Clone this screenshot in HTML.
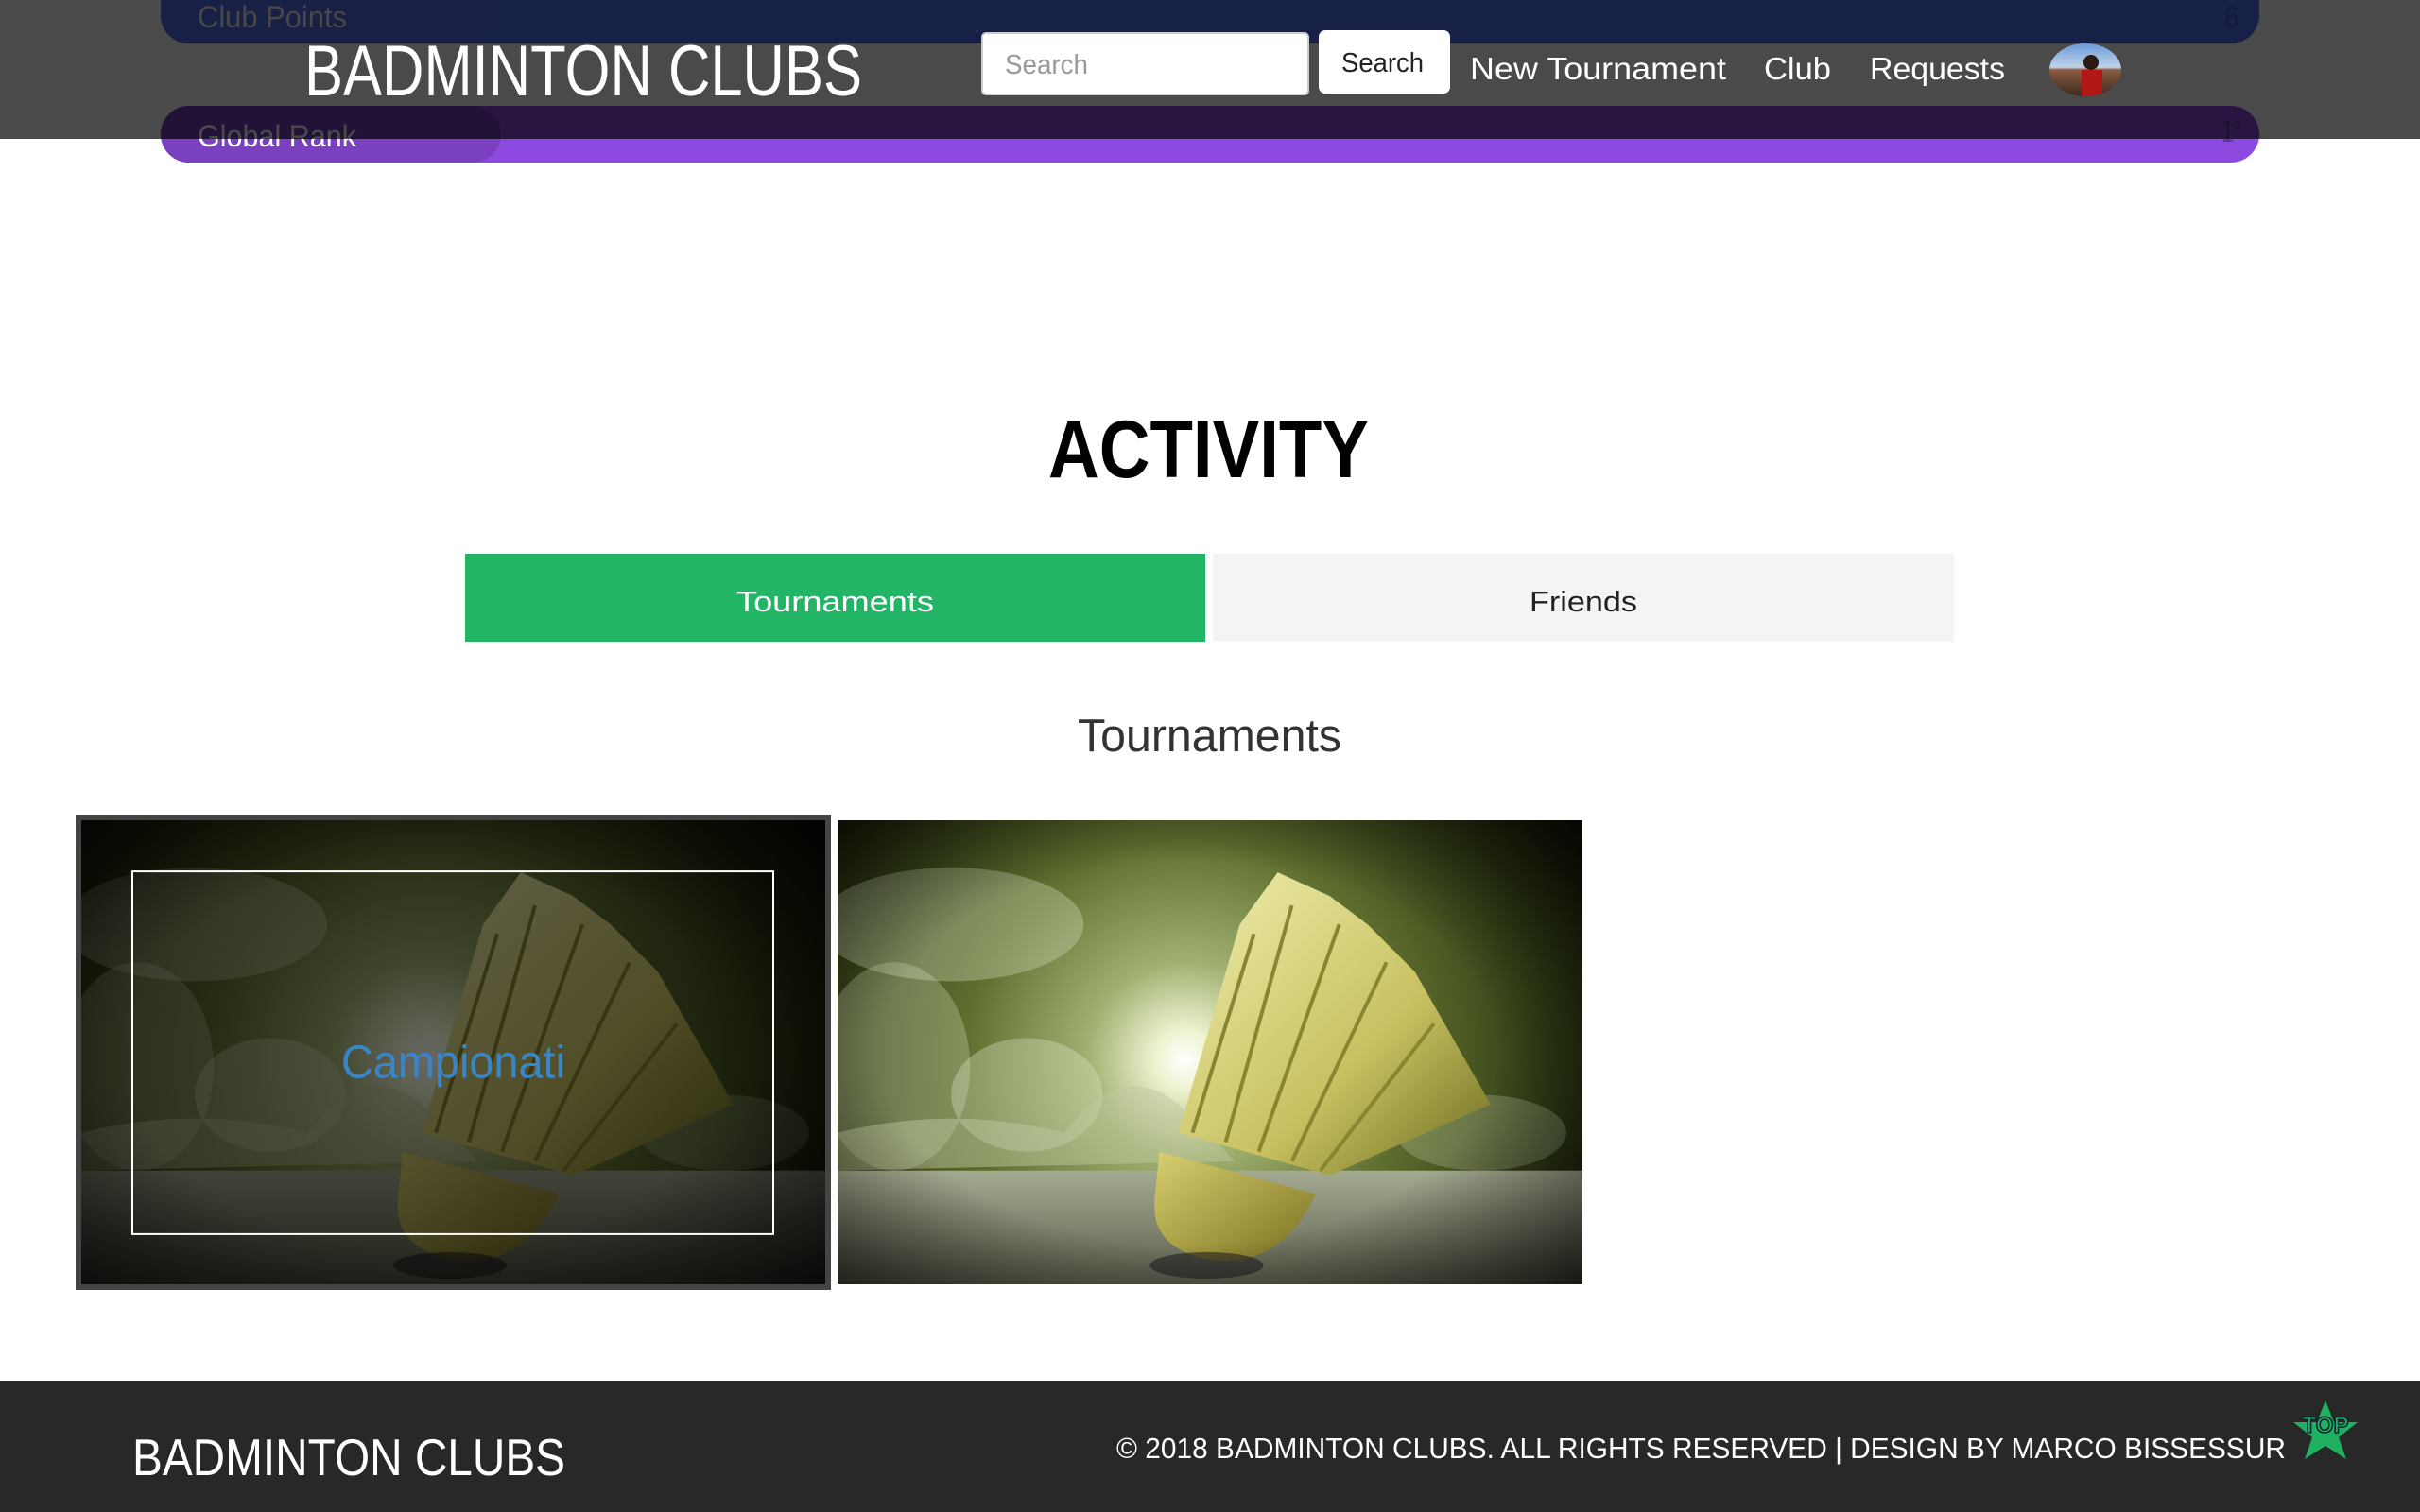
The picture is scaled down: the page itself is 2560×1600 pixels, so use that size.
<!DOCTYPE html>
<html><head><meta charset="utf-8">
<style>
*{margin:0;padding:0;box-sizing:border-box}
html,body{width:2560px;height:1600px;overflow:hidden;background:#fff;position:relative;font-family:"Liberation Sans",sans-serif}
.abs{position:absolute}
svg text{font-family:"Liberation Sans",sans-serif}
</style></head><body>

<div class="abs" style="left:170px;top:112px;width:2220px;height:60px;background:#8c4ae0;border-radius:30px;z-index:1"></div>
<div class="abs" style="left:170px;top:112px;width:360px;height:60px;background:#7a40c0;border-radius:30px;z-index:1"></div>
<div class="abs" style="left:0;top:0;width:2560px;height:147px;background:rgba(0,0,0,0.71);z-index:2"></div>
<div class="abs" style="left:170px;top:-60px;width:2220px;height:106px;background:#172047;border-radius:30px;z-index:3"></div>
<div class="abs" style="left:170px;top:-60px;width:360px;height:106px;background:#182045;border-radius:30px;z-index:3"></div>

<div class="abs" style="left:1038px;top:34px;width:347px;height:67px;background:#fff;border:2px solid #ccc;border-radius:5px;z-index:4"></div>
<div class="abs" style="left:1395px;top:32px;width:139px;height:67px;background:#fff;border-radius:7px;z-index:4"></div>
<svg class="abs" style="left:2168px;top:46px;z-index:4" width="76" height="56" viewBox="0 0 76 56">
<defs><clipPath id="av"><ellipse cx="38" cy="28" rx="38" ry="28"/></clipPath>
<linearGradient id="sky" x1="0" y1="0" x2="0" y2="1"><stop offset="0" stop-color="#6a9ad8"/><stop offset="0.45" stop-color="#c0d4e8"/><stop offset="0.5" stop-color="#8a5a40"/><stop offset="1" stop-color="#3a2a20"/></linearGradient></defs>
<g clip-path="url(#av)"><rect width="76" height="56" fill="url(#sky)"/>
<rect x="34" y="28" width="22" height="28" fill="#b01818"/><circle cx="44" cy="20" r="8" fill="#2a1a12"/></g></svg>

<svg class="abs" style="left:0;top:0;z-index:5" width="2560" height="1600">
<text x="209" y="29" font-size="32" fill="#474747" textLength="158" lengthAdjust="spacingAndGlyphs">Club Points</text>
<text x="2354" y="29" font-size="32" fill="#14193a" textLength="14" lengthAdjust="spacingAndGlyphs">6</text>
<text x="322" y="101" font-size="76" fill="#fff" textLength="590" lengthAdjust="spacingAndGlyphs">BADMINTON CLUBS</text>
<text x="1063" y="78" font-size="29" fill="#999" textLength="88" lengthAdjust="spacingAndGlyphs">Search</text>
<text x="1419" y="76" font-size="29" fill="#222" textLength="87" lengthAdjust="spacingAndGlyphs">Search</text>
<text x="1555" y="84" font-size="33" fill="#fff" textLength="271" lengthAdjust="spacingAndGlyphs">New Tournament</text>
<text x="1866" y="84" font-size="33" fill="#fff" textLength="71" lengthAdjust="spacingAndGlyphs">Club</text>
<text x="1978" y="84" font-size="33" fill="#fff" textLength="143" lengthAdjust="spacingAndGlyphs">Requests</text>
</svg>
<svg class="abs" style="left:0;top:0;z-index:1" width="2560" height="200">
<text x="209" y="155" font-size="32" fill="#fff" textLength="168" lengthAdjust="spacingAndGlyphs">Global Rank</text>
<text x="2350" y="150" font-size="32" fill="#5a3a90" textLength="22" lengthAdjust="spacingAndGlyphs">1°</text>
</svg>

<div class="abs" style="left:492px;top:586px;width:783px;height:93px;background:#23b566"></div>
<div class="abs" style="left:1283px;top:586px;width:784px;height:93px;background:#f4f4f4"></div>
<svg class="abs" style="left:0;top:400px" width="2560" height="420">
<text x="1109" y="105" font-size="86" font-weight="bold" fill="#000" textLength="339" lengthAdjust="spacingAndGlyphs">ACTIVITY</text>
<text x="779" y="247" font-size="31" fill="#fff" textLength="209" lengthAdjust="spacingAndGlyphs">Tournaments</text>
<text x="1618" y="247" font-size="31" fill="#222" textLength="114" lengthAdjust="spacingAndGlyphs">Friends</text>
<text x="1140" y="395" font-size="49" fill="#333" textLength="279" lengthAdjust="spacingAndGlyphs">Tournaments</text>
</svg>

<div class="abs" style="left:80px;top:862px;width:799px;height:503px;background:#444"></div>
<svg class="abs" style="left:86px;top:868px" width="787" height="491" viewBox="0 0 787 490" preserveAspectRatio="none">
<defs>
<radialGradient id="bg1" cx="367" cy="253" r="520" gradientUnits="userSpaceOnUse"><stop offset="0" stop-color="#fff"/><stop offset="0.06" stop-color="#eef3d0"/><stop offset="0.2" stop-color="#a0b070"/><stop offset="0.45" stop-color="#5e6e2e"/><stop offset="0.75" stop-color="#2e3913"/><stop offset="1" stop-color="#0a0f03"/></radialGradient>
<linearGradient id="gr1" x1="0" y1="0" x2="0" y2="1"><stop offset="0" stop-color="#a4aa90"/><stop offset="1" stop-color="#5a5e4c"/></linearGradient>
<radialGradient id="vg1" cx="0.47" cy="0.5" r="0.75"><stop offset="0.55" stop-color="#000" stop-opacity="0"/><stop offset="1" stop-color="#000" stop-opacity="0.8"/></radialGradient>
<linearGradient id="fe1" x1="0" y1="0" x2="1" y2="1"><stop offset="0" stop-color="#f0f0b0"/><stop offset="0.6" stop-color="#c8c060"/><stop offset="1" stop-color="#6a6a20"/></linearGradient>
<linearGradient id="ck1" x1="0" y1="0" x2="1" y2="1"><stop offset="0" stop-color="#d8d070"/><stop offset="1" stop-color="#7a7020"/></linearGradient>
<g id="cl">
<ellipse cx="120" cy="110" rx="140" ry="60" fill="#d8e0c0" opacity="0.35"/>
<ellipse cx="60" cy="260" rx="80" ry="110" fill="#d8e0c0" opacity="0.3"/>
<ellipse cx="200" cy="290" rx="80" ry="60" fill="#e0e8c8" opacity="0.35"/>
<ellipse cx="680" cy="330" rx="90" ry="40" fill="#d8e0c0" opacity="0.25"/>
</g>
</defs>
<rect width="787" height="490" fill="url(#bg1)"/>
<use href="#cl"/>
<path d="M0 330 Q120 300 240 330 Q300 250 360 300 L420 360 L0 370Z" fill="#bfc8a0" opacity="0.5"/>
<rect y="370" width="787" height="120" fill="url(#gr1)"/>
<path d="M425 110 L465 55 L520 80 L560 110 L610 160 L650 230 L690 300 L520 375 L360 330Z" fill="url(#fe1)"/>
<path d="M440 120 L375 330 M480 90 L410 340 M530 110 L445 350 M580 150 L480 360 M630 215 L510 370" stroke="#8a8530" stroke-width="4"/>
<path d="M340 350 L505 395 Q470 470 400 465 Q330 455 335 400Z" fill="url(#ck1)"/>
<ellipse cx="390" cy="470" rx="60" ry="14" fill="#222" opacity="0.6"/>
<rect width="787" height="490" fill="url(#vg1)"/>
<rect width="787" height="490" fill="#000" opacity="0.6"/>
<rect x="54" y="54" width="678" height="383" fill="none" stroke="#fff" stroke-width="2"/>
<text x="275" y="272" font-size="49" fill="#3a85c6" textLength="237" lengthAdjust="spacingAndGlyphs">Campionati</text>
</svg>

<svg class="abs" style="left:886px;top:868px" width="788" height="491" viewBox="0 0 787 490" preserveAspectRatio="none">
<rect width="787" height="490" fill="url(#bg1)"/>
<use href="#cl"/>
<path d="M0 330 Q120 300 240 330 Q300 250 360 300 L420 360 L0 370Z" fill="#bfc8a0" opacity="0.5"/>
<rect y="370" width="787" height="120" fill="url(#gr1)"/>
<path d="M425 110 L465 55 L520 80 L560 110 L610 160 L650 230 L690 300 L520 375 L360 330Z" fill="url(#fe1)"/>
<path d="M440 120 L375 330 M480 90 L410 340 M530 110 L445 350 M580 150 L480 360 M630 215 L510 370" stroke="#8a8530" stroke-width="4"/>
<path d="M340 350 L505 395 Q470 470 400 465 Q330 455 335 400Z" fill="url(#ck1)"/>
<ellipse cx="390" cy="470" rx="60" ry="14" fill="#222" opacity="0.6"/>
<rect width="787" height="490" fill="url(#vg1)"/>
</svg>

<div class="abs" style="left:0;top:1461px;width:2560px;height:139px;background:#282828"></div>
<svg class="abs" style="left:0;top:1461px" width="2560" height="139">
<text x="140" y="100" font-size="55" fill="#fff" textLength="458" lengthAdjust="spacingAndGlyphs">BADMINTON CLUBS</text>
<text x="1181" y="82" font-size="31" fill="#fff" textLength="1237" lengthAdjust="spacingAndGlyphs">© 2018 BADMINTON CLUBS. ALL RIGHTS RESERVED | DESIGN BY MARCO BISSESSUR</text>
<polygon points="2460,21 2469,44 2494,44 2474,60 2482,83 2460,69 2438,83 2446,60 2426,44 2451,44" fill="#1fb062"/>
<text x="2460" y="55" font-size="24" font-weight="bold" fill="#1fb062" stroke="#123" stroke-width="1.5" text-anchor="middle">TOP</text>
</svg>
</body></html>
